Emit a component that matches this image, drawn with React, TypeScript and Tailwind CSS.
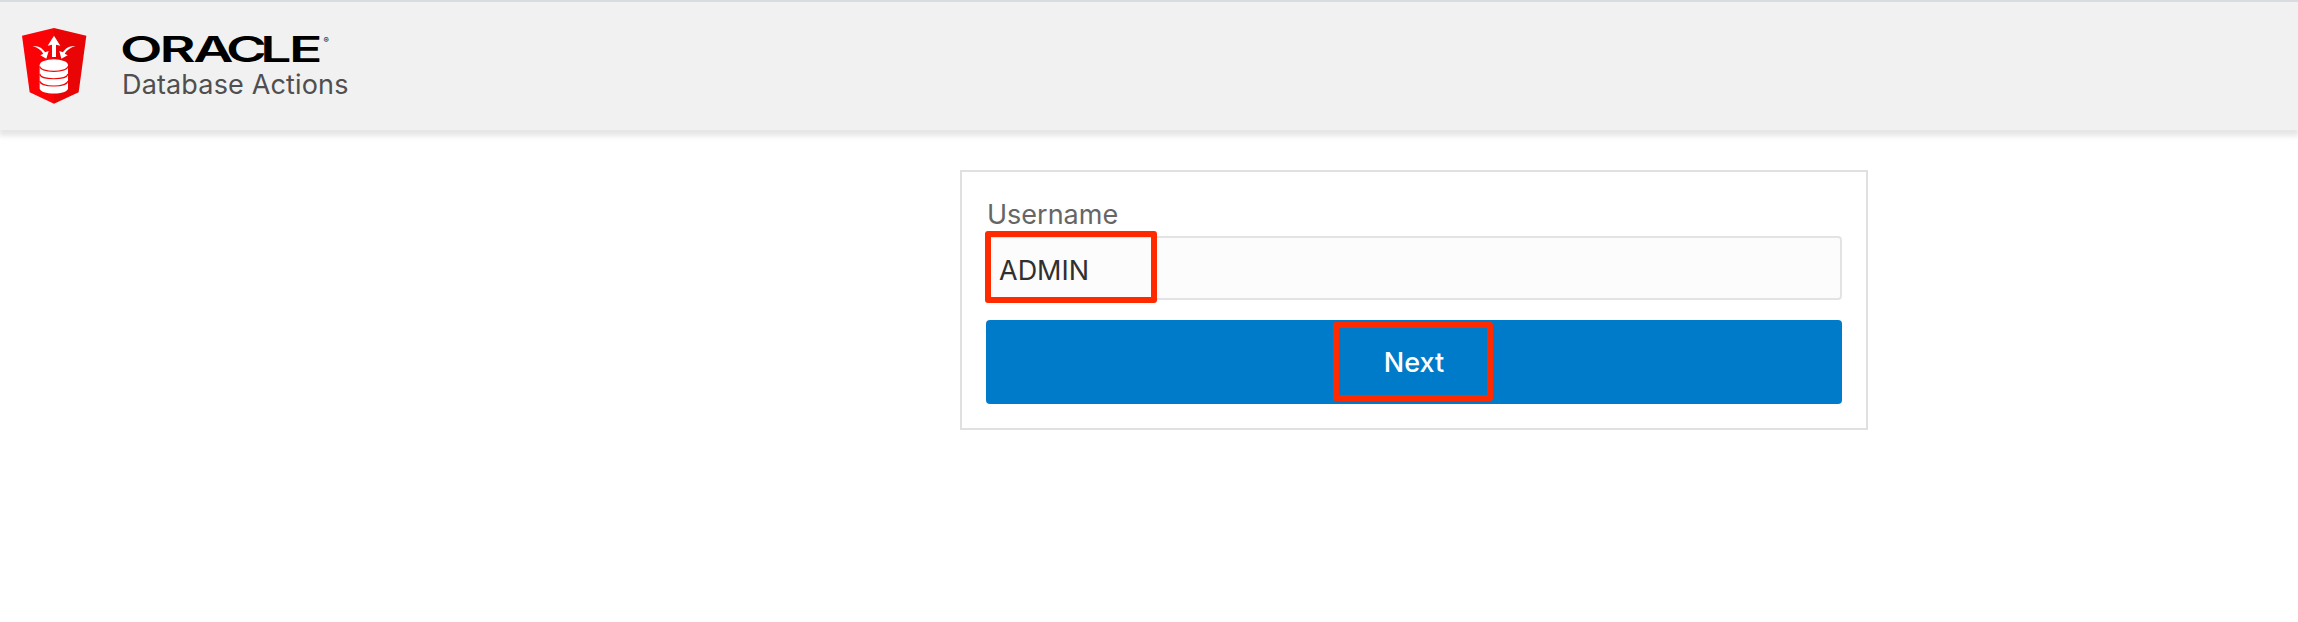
function ShieldIcon() {
  return (
    <svg className="h-[78px] w-[66px] shrink-0" viewBox="63 81 198 234" aria-hidden="true">
      <path d="M162 84 66 107 89 277 162 311Z" fill="#fb0207" />
      <path d="M162 84 259 107 236 277 162 311Z" fill="#e90406" />
      <path d="M119 195V265C119 286 204 286 204 265V195Z" fill="#fff" />
      <ellipse cx="161.500" cy="195" rx="42.500" ry="17" fill="#fff" />
      <g fill="none" stroke="#f00507" strokeWidth="3.500">
        <path d="M119 199C124 219 199 219 204 199" />
        <path d="M119 222C124 241 199 241 204 222" />
        <path d="M119 243C124 263 199 263 204 243" />
      </g>
      <path d="M162 107 181 137 168 134V171H156V134L143 137Z" fill="#fff" />
      <path d="M98 138C116 137 129 146 135 157L146 153 139 176 121 166 130 161C123 149 112 143 98 138Z" fill="#fff" />
      <path d="M226 138C208 137 195 146 189 157L178 153 184 176 203 166 194 161C201 149 212 143 226 138Z" fill="#fff" />
    </svg>
  );
}

function Wordmark() {
  return (
    <svg className="-ml-1 h-[30px] w-[220px] overflow-visible" viewBox="-4 0 220 30" role="img" aria-label="Oracle">
      <text
        x="-0.700 24.300 45.700 66.400 88.200 106.400"
        y="28"
        transform="scale(1.58 1)"
        className="fill-black font-['Inter',sans-serif] text-[35px] font-semibold"
      >
        ORACLE
      </text>
      <text x="202.500" y="8.500" className="fill-black font-['Inter',sans-serif] text-[8px]">®</text>
    </svg>
  );
}

export default function App() {
  return (
    <div className="h-[622px] w-full bg-white font-['Inter',sans-serif]">
      <header className="flex h-[130px] items-start border-t-2 border-[#d8dce0] bg-[#f1f1f1] pl-[21px] shadow-[0_5px_5px_1px_rgba(0,0,0,0.1)]">
        <div className="pt-[25px]">
          <ShieldIcon />
        </div>
        <div className="flex flex-col pt-8 pl-[34px]">
          <Wordmark />
          <span className="mt-[3px] pl-px text-[27px] leading-[36px] tracking-[0.150px] text-[#4f4f4f]">Database Actions</span>
        </div>
      </header>
      <main className="flex pt-10 pl-[960px]">
        <form className="flex h-[260px] w-[908px] flex-col border-2 border-[#e0e0e0] px-6 pt-6">
          <label htmlFor="username" className="h-10 pl-px text-[27px] leading-[38px] text-[#666]">
            Username
          </label>
          <div className="relative h-16">
            <input
              id="username"
              defaultValue="ADMIN"
              className="h-16 w-full rounded-[4px] border-2 border-[#e3e3e3] bg-[#fcfcfc] px-[11px] pt-[5px] text-[27px] text-[#303030] outline-none"
            />
            <div className="pointer-events-none absolute -top-[5px] -left-px h-[72px] w-[172px] rounded-[3px] border-6 border-[#ff2a00]" />
          </div>
          <button type="button" className="relative mt-5 h-[84px] rounded-[4px] bg-[#007bc9] pt-0.5 text-[27px] font-medium text-white">
            Next
            <span className="pointer-events-none absolute top-[2px] left-[347px] h-[79px] w-[160px] rounded-[3px] border-6 border-[#ff2a00]" />
          </button>
        </form>
      </main>
    </div>
  );
}
